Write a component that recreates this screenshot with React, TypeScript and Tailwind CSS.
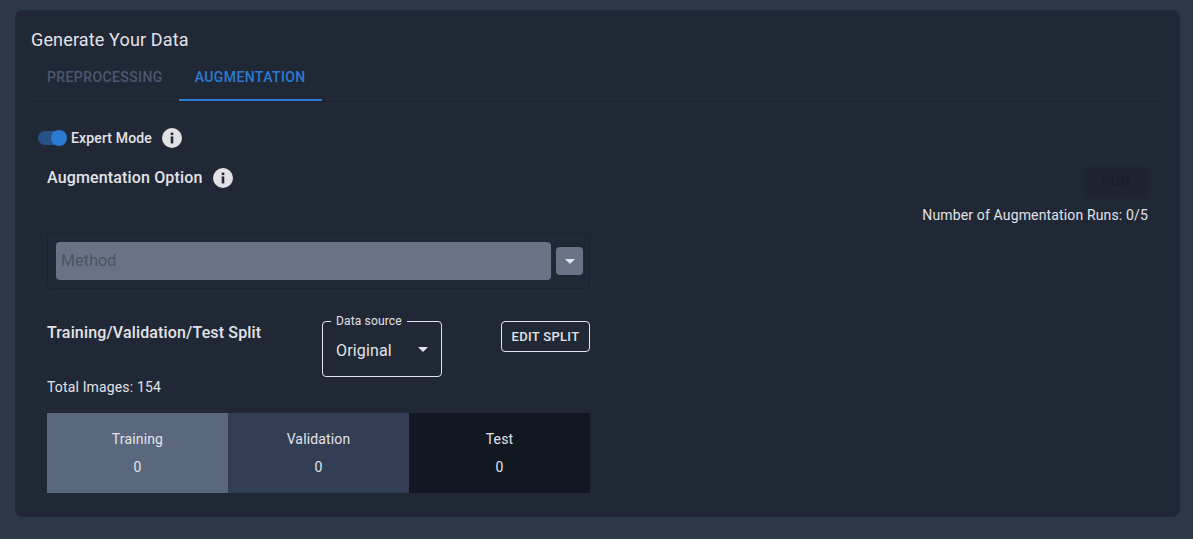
function InfoDot() {
  return (
    <svg width="20" height="20" viewBox="0 0 20 20" className="shrink-0">
      <circle cx="10" cy="10" r="10" fill="#e2e2e6" />
      <rect x="8.7" y="8.4" width="2.6" height="7" fill="#222835" />
      <rect x="8.7" y="4.6" width="2.6" height="2.5" fill="#222835" />
    </svg>
  );
}

function Caret({ color }: { color: string }) {
  return (
    <svg width="10" height="5" viewBox="0 0 10 5" className="shrink-0">
      <path d="M0 0h10L5 5z" fill={color} />
    </svg>
  );
}

const splits = [
  { label: 'Training', value: 0, bg: 'bg-[#5a687f]' },
  { label: 'Validation', value: 0, bg: 'bg-[#323e53]' },
  { label: 'Test', value: 0, bg: 'bg-[#111822]' },
];

export default function App() {
  return (
    <div className="w-[1193px] h-[539px] overflow-hidden bg-[#2b3848] pl-[15px] pr-[13px] pt-[10px] font-['Roboto',sans-serif] tracking-[0.15px] text-[#e2e3e8]">
      <div className="h-[507px] rounded-lg bg-[#212835] pl-4 pr-[18px]">
        <h1 className="pt-[18px] text-[18px] leading-[24px] font-normal">Generate Your Data</h1>

        <div className="mt-[5px] flex h-[45px] border-b border-[#1c212c]">
          <div className="h-[44px] px-4 pt-[10px] text-[14px] leading-[20px] font-medium tracking-[0.4px] text-[#4a5871]">
            PREPROCESSING
          </div>
          <div className="h-[44px] border-b-2 border-[#2b7bd5] px-4 pt-[10px] text-[14px] leading-[20px] font-medium tracking-[0.4px] text-[#2b7bd5]">
            AUGMENTATION
          </div>
        </div>

        <div className="mt-[26px] ml-[7px] flex h-[20px] items-center">
          <div className="relative h-[14px] w-[26px] rounded-full bg-[#285287]">
            <div className="absolute left-[13px] top-[-1px] h-[16px] w-[16px] rounded-full bg-[#2b7bd5]" />
          </div>
          <span className="ml-[7px] text-[14px] font-medium">Expert Mode</span>
          <span className="ml-[10px]"><InfoDot /></span>
        </div>

        <div className="flex justify-between pl-4 pr-[14px]">
          <div className="mt-[20px] flex h-[20px] items-center">
            <span className="text-[16px] font-medium">Augmentation Option</span>
            <span className="ml-[11px]"><InfoDot /></span>
          </div>
          <div className="mt-[18px] flex flex-col items-end">
            <button className="h-[31px] w-[64px] rounded bg-[#1f2530] pb-[1px] text-[14px] font-medium text-[#191e28]">RUN</button>
            <p className="mt-[8px] text-[14px] leading-[20px]">Number of Augmentation Runs: 0/5</p>
          </div>
        </div>

        <div className="ml-4 mt-[8px] w-[543px]">
          <div className="flex h-[56px] items-center rounded border border-[#1c212c] pl-2 pr-[6px]">
            <div className="flex h-[38px] flex-1 items-center rounded bg-[#687385] px-[5px] text-[16px] text-[#4a5462]">Method</div>
            <div className="ml-[5px] flex h-[28px] w-[27px] items-center justify-center rounded bg-[#687385]">
              <Caret color="#e2e3e8" />
            </div>
          </div>

          <div className="mt-[32px] flex items-start">
            <h2 className="mt-[2px] w-[275px] text-[16px] leading-[20px] font-medium">Training/Validation/Test Split</h2>
            <div className="relative flex h-[56px] w-[120px] items-center justify-between rounded border border-[#e2e3e8] px-[13px]">
              <span className="absolute left-[8px] top-[-8px] bg-[#212835] px-[5px] text-[12px] leading-[14px]">Data source</span>
              <span className="pt-[3px] text-[16px]">Original</span>
              <Caret color="#e2e3e8" />
            </div>
            <button className="ml-auto h-[31px] w-[89px] rounded border border-[#e2e3e8] text-[13px] font-medium tracking-[0.3px]">EDIT SPLIT</button>
          </div>

          <p className="text-[14px] leading-[20px]">Total Images: 154</p>

          <div className="mt-[16px] grid h-[80px] grid-cols-3">
            {splits.map((s) => (
              <div key={s.label} className={`${s.bg} flex flex-col items-center pt-[16px] text-[14px] leading-[20px]`}>
                <span>{s.label}</span>
                <span className="mt-[8px]">{s.value}</span>
              </div>
            ))}
          </div>
        </div>
      </div>
    </div>
  );
}
